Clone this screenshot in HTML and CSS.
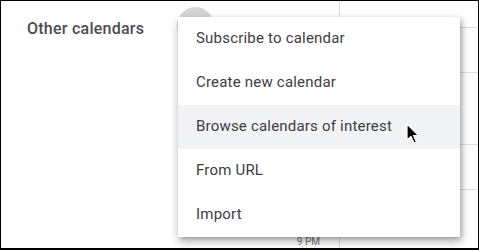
FILE: index.html
```html
<!DOCTYPE html>
<html lang="en">
<head>
    <meta charset="UTF-8">
    <title>Other calendars menu</title>
    <link rel="stylesheet" href="styles.css">
</head>
<body>
    <div class="frame">
        <div class="sidebar">
            <div class="section-head">
                <span class="section-title">Other calendars</span>
                <span class="add-btn"></span>
            </div>
            <span class="time-label">9 PM</span>
        </div>

        <div class="grid">
            <div class="slot" style="height: 26px"></div>
            <div class="slot" style="height: 44px"></div>
            <div class="slot" style="height: 71px"></div>
            <div class="slot" style="height: 44px"></div>
        </div>

        <!-- menu opened from the add button -->
        <ul class="menu">
            <li>Subscribe to calendar</li>
            <li>Create new calendar</li>
            <li class="hover">Browse calendars of interest</li>
            <li>From URL</li>
            <li>Import</li>
        </ul>

        <svg class="cursor" width="14" height="22" viewBox="0 0 14 22">
            <path d="M1 1 L1 17 L5 13.5 L8 20 L10.5 19 L7.5 12.5 L12.5 12.5 Z" fill="#000" stroke="#fff" stroke-width="1.2" stroke-linejoin="round"/>
        </svg>
    </div>
</body>
</html>
```

FILE: styles.css
```css
body {
    margin: 0;
    background-color: #fff;
}

.frame {
    position: relative;
    width: 479px;
    height: 250px;
    box-sizing: border-box;
    border: 1px solid #000;
    border-bottom-width: 2px;
    display: flex;
    overflow: hidden;
    background-color: #fff;
}

.sidebar {
    width: 338px;
    display: flex;
    flex-direction: column;
}

.section-head {
    display: flex;
    align-items: flex-start;
    padding: 6px 0 0 26px;
}

.section-title {
    font-family: 'Roboto', sans-serif;
    font-size: 16px;
    font-weight: 500;
    color: #4a4d51;
    margin-top: 12px;
    letter-spacing: 0.25px;
}

.add-btn {
    width: 37px;
    height: 37px;
    border-radius: 50%;
    background-color: #d6d6d6;
    margin-left: 33px;
}

.time-label {
    margin-top: auto;
    align-self: flex-end;
    margin-right: 19px;
    margin-bottom: 1px;
    font-family: 'Roboto', sans-serif;
    font-size: 10px;
    color: #70757a;
}

.grid {
    flex: 1;
    border-left: 1px solid #dadce0;
}

.slot {
    border-bottom: 1px solid #dadce0;
}

.menu {
    position: absolute;
    left: 177px;
    top: 16px;
    width: 282px;
    margin: 0;
    padding: 0;
    list-style: none;
    background-color: #fff;
    box-shadow: 1px 4px 9px rgba(0, 0, 0, 0.32), 2px 2px 4px rgba(0, 0, 0, 0.14);
}

.menu li {
    height: 44px;
    line-height: 43px;
    padding-left: 18px;
    font-family: 'Roboto', sans-serif;
    font-size: 15px;
    letter-spacing: 0.2px;
    color: #3c4043;
}

.menu li.hover {
    background-color: #f1f3f4;
}

.cursor {
    position: absolute;
    left: 405px;
    top: 122px;
}
```
